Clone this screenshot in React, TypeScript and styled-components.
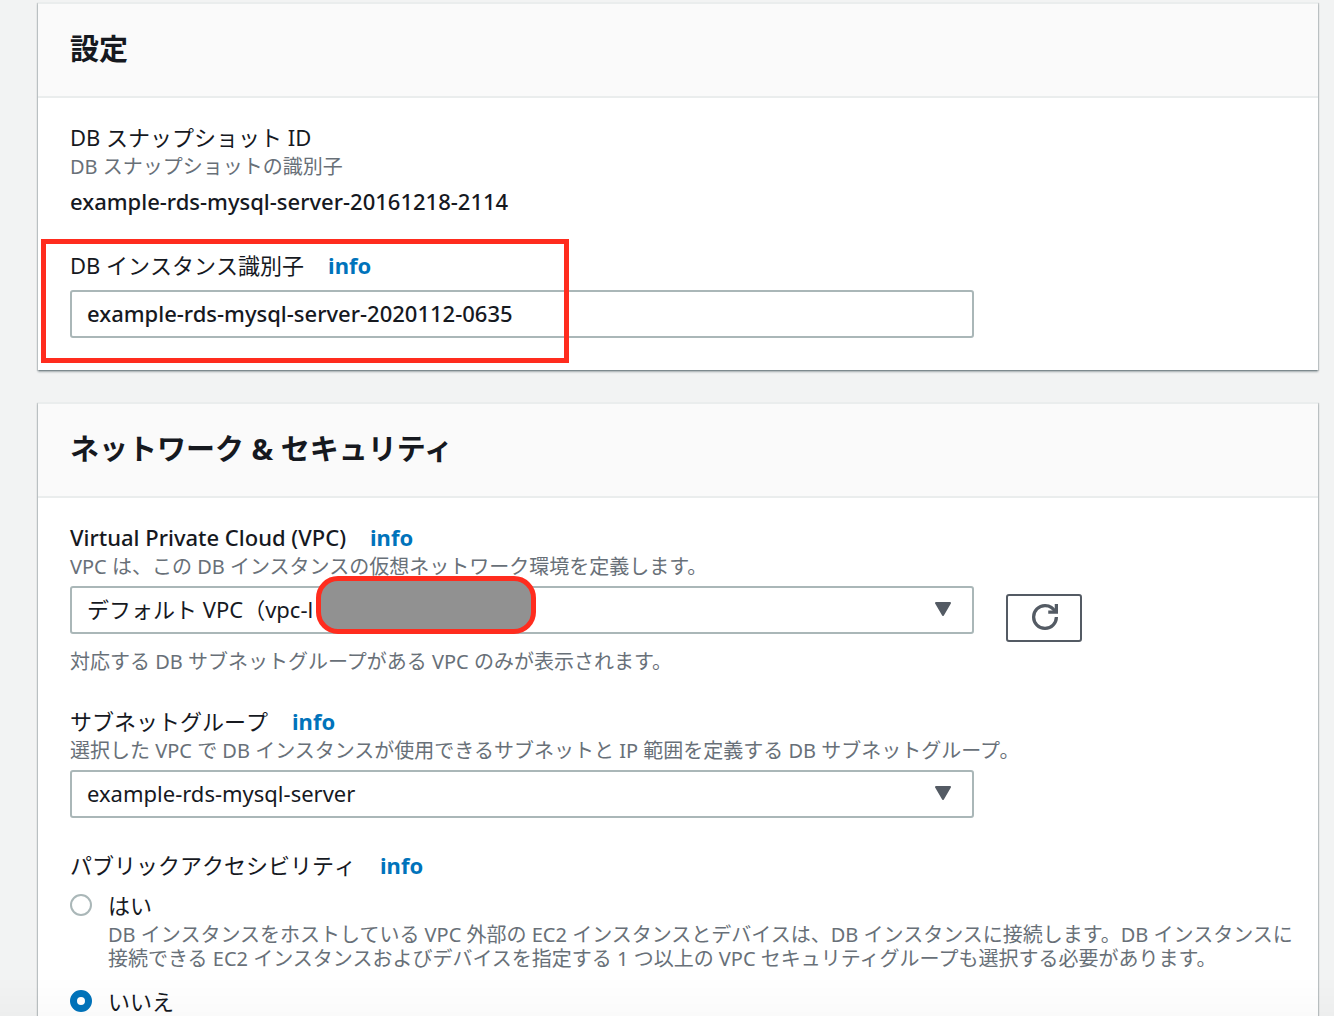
import React, { useState } from "react";
import type { ReactNode } from "react";
import styled, { createGlobalStyle } from "styled-components";

const GlobalStyle = createGlobalStyle`
  *, *::before, *::after { box-sizing: border-box; }
  body {
    margin: 0;
    background: #f2f3f3;
    color: #16191f;
    font-family: "Noto Sans", "Noto Sans CJK JP", sans-serif;
    font-size: 22px;
    line-height: 30px;
  }
`;

const Page = styled.main`
  display: flex;
  flex-direction: column;
  gap: 32px;
  padding: 2px 16px 32px 38px;
`;

const Card = styled.section`
  background: #fff;
  border-top: 2px solid #eaeded;
  box-shadow:
    0 2px 2px 0 rgba(0, 28, 36, 0.3),
    1px 1px 1px 0 rgba(0, 28, 36, 0.15),
    -1px 1px 1px 0 rgba(0, 28, 36, 0.15);
`;

const CardHeader = styled.header`
  padding: 25px 32px 27px;
  background: #fafafa;
  border-bottom: 2px solid #eaeded;
`;

const CardTitle = styled.h2`
  margin: 0;
  font-size: 29px;
  line-height: 40px;
  font-weight: 700;
`;

const CardBody = styled.div`
  display: flex;
  flex-direction: column;
  gap: 32px;
  padding: 24px 24px 32px 32px;
`;

const Field = styled.div`
  position: relative;
  display: flex;
  flex-direction: column;
`;

const LabelRow = styled.div<{ $medium?: boolean }>`
  display: flex;
  gap: 24px;
  padding-bottom: 3px;
  font-weight: ${(props) => (props.$medium ? 500 : 400)};
  font-kerning: none;
`;

const InfoLink = styled.a`
  color: #0073bb;
  font-weight: 700;
  text-decoration: none;
`;

const Hint = styled.p`
  margin: 0;
  color: #687078;
  font-size: 20px;
  line-height: 24px;
`;

const Value = styled.p`
  margin: 7px 0 2px;
  font-weight: 500;
`;

const ControlRow = styled.div`
  display: grid;
  grid-template-columns: minmax(0, 904px) auto;
  justify-content: start;
  align-items: start;
  gap: 32px;
  margin-top: 7px;
`;

const controlBox = `
  width: 100%;
  height: 48px;
  padding: 0 15px 2px;
  border: 2px solid #aab7b8;
  border-radius: 3px;
  background: #fff;
  color: #16191f;
  font: inherit;
`;

const TextInput = styled.input`
  ${controlBox}
  font-weight: 500;
`;

const SelectBox = styled.div`
  position: relative;
  display: grid;
  align-items: center;
`;

const SelectInput = styled.select`
  ${controlBox}
  grid-area: 1 / 1;
  appearance: none;
  padding-right: 56px;
`;

const Caret = styled.svg`
  grid-area: 1 / 1;
  justify-self: end;
  margin: 0 23px 2px 0;
  pointer-events: none;
`;

const RefreshButton = styled.button`
  display: flex;
  align-items: center;
  justify-content: center;
  width: 76px;
  height: 48px;
  margin-top: 8px;
  padding: 0 0 2px 2px;
  border: 2px solid #545b64;
  border-radius: 3px;
  background: #fff;
  color: #545b64;
`;

const Constraint = styled(Hint)`
  margin-top: 8px;
`;

const HighlightFrame = styled.div`
  position: absolute;
  top: -11px;
  left: -29px;
  width: 528px;
  height: 124px;
  border: 5px solid #ff2c1e;
  pointer-events: none;
`;

const RedactionMark = styled.div`
  position: absolute;
  top: -10px;
  left: 246px;
  width: 220px;
  height: 58px;
  border: 5px solid #ff2c1e;
  border-radius: 22px;
  background: #919191;
`;

const RadioGroup = styled.fieldset`
  display: flex;
  flex-direction: column;
  gap: 15px;
  min-width: 0;
  margin: 0;
  padding: 0;
  border: 0;
`;

const RadioLegend = styled.legend`
  display: flex;
  gap: 24px;
  padding: 0 0 10px;
  font-kerning: none;
`;

const RadioOption = styled.div`
  display: grid;
  grid-template-columns: 22px minmax(0, 1fr);
  gap: 3px 16px;
  align-items: center;
`;

const RadioInput = styled.input`
  appearance: none;
  width: 22px;
  height: 22px;
  margin: 0;
  border: 2px solid #aab7b8;
  border-radius: 50%;
  background: #fff;
  &:checked {
    border: 7px solid #0073bb;
  }
`;

const RadioHint = styled(Hint)`
  grid-column: 2;
`;

const BottomShade = styled.div`
  position: fixed;
  right: 0;
  bottom: 0;
  left: 0;
  height: 40px;
  background: linear-gradient(rgba(0, 0, 0, 0), rgba(0, 0, 0, 0.02));
  pointer-events: none;
`;

function Panel({ title, children }: { title: string; children: ReactNode }) {
  return (
    <Card>
      <CardHeader>
        <CardTitle>{title}</CardTitle>
      </CardHeader>
      <CardBody>{children}</CardBody>
    </Card>
  );
}

function FieldLabel({ htmlFor, medium, children }: { htmlFor: string; medium?: boolean; children: ReactNode }) {
  return (
    <LabelRow $medium={medium}>
      <label htmlFor={htmlFor}>{children}</label>
      <InfoLink href="#info">info</InfoLink>
    </LabelRow>
  );
}

function Dropdown({ id, option, children }: { id: string; option: string; children?: ReactNode }) {
  return (
    <SelectBox>
      <SelectInput id={id}>
        <option>{option}</option>
      </SelectInput>
      <Caret width="16" height="14" viewBox="0 0 16 14" aria-hidden="true">
        <path d="M1 1h14L8 13z" fill="#545b64" stroke="#545b64" strokeWidth="2" strokeLinejoin="round" />
      </Caret>
      {children}
    </SelectBox>
  );
}

function RefreshIcon() {
  return (
    <svg width="26" height="26" viewBox="0 0 16 16" fill="none" stroke="currentColor" strokeWidth="2" aria-hidden="true">
      <path d="M10 5h5V0" />
      <path d="M15 8a6.957 6.957 0 0 1-7 7 6.957 6.957 0 0 1-7-7 6.957 6.957 0 0 1 7-7 6.87 6.87 0 0 1 6.3 4" />
    </svg>
  );
}

export default function App() {
  const [identifier, setIdentifier] = useState("example-rds-mysql-server-2020112-0635");
  const [isPublic, setIsPublic] = useState(false);

  return (
    <>
      <GlobalStyle />
      <Page>
        <Panel title="設定">
          <Field>
            <LabelRow>DB スナップショット ID</LabelRow>
            <Hint>DB スナップショットの識別子</Hint>
            <Value>example-rds-mysql-server-20161218-2114</Value>
          </Field>
          <Field>
            <FieldLabel htmlFor="identifier">DB インスタンス識別子</FieldLabel>
            <ControlRow>
              <TextInput
                id="identifier"
                type="text"
                value={identifier}
                onChange={(event) => setIdentifier(event.target.value)}
              />
            </ControlRow>
            <HighlightFrame />
          </Field>
        </Panel>

        <Panel title="ネットワーク & セキュリティ">
          <Field>
            <FieldLabel htmlFor="vpc" medium>
              Virtual Private Cloud (VPC)
            </FieldLabel>
            <Hint>VPC は、この DB インスタンスの仮想ネットワーク環境を定義します。</Hint>
            <ControlRow>
              <Dropdown id="vpc" option="デフォルト VPC（vpc-l">
                <RedactionMark />
              </Dropdown>
              <RefreshButton type="button" aria-label="更新">
                <RefreshIcon />
              </RefreshButton>
            </ControlRow>
            <Constraint>対応する DB サブネットグループがある VPC のみが表示されます。</Constraint>
          </Field>
          <Field>
            <FieldLabel htmlFor="subnet">サブネットグループ</FieldLabel>
            <Hint>選択した VPC で DB インスタンスが使用できるサブネットと IP 範囲を定義する DB サブネットグループ。</Hint>
            <ControlRow>
              <Dropdown id="subnet" option="example-rds-mysql-server" />
            </ControlRow>
          </Field>
          <RadioGroup>
            <RadioLegend>
              <span>パブリックアクセシビリティ</span>
              <InfoLink href="#info">info</InfoLink>
            </RadioLegend>
            <RadioOption>
              <RadioInput
                id="public-yes"
                type="radio"
                name="public"
                checked={isPublic}
                onChange={() => setIsPublic(true)}
              />
              <label htmlFor="public-yes">はい</label>
              <RadioHint>
                DB インスタンスをホストしている VPC 外部の EC2 インスタンスとデバイスは、DB インスタンスに接続します。DB
                インスタンスに接続できる EC2 インスタンスおよびデバイスを指定する 1 つ以上の VPC
                セキュリティグループも選択する必要があります。
              </RadioHint>
            </RadioOption>
            <RadioOption>
              <RadioInput
                id="public-no"
                type="radio"
                name="public"
                checked={!isPublic}
                onChange={() => setIsPublic(false)}
              />
              <label htmlFor="public-no">いいえ</label>
            </RadioOption>
          </RadioGroup>
        </Panel>
      </Page>
      <BottomShade />
    </>
  );
}
